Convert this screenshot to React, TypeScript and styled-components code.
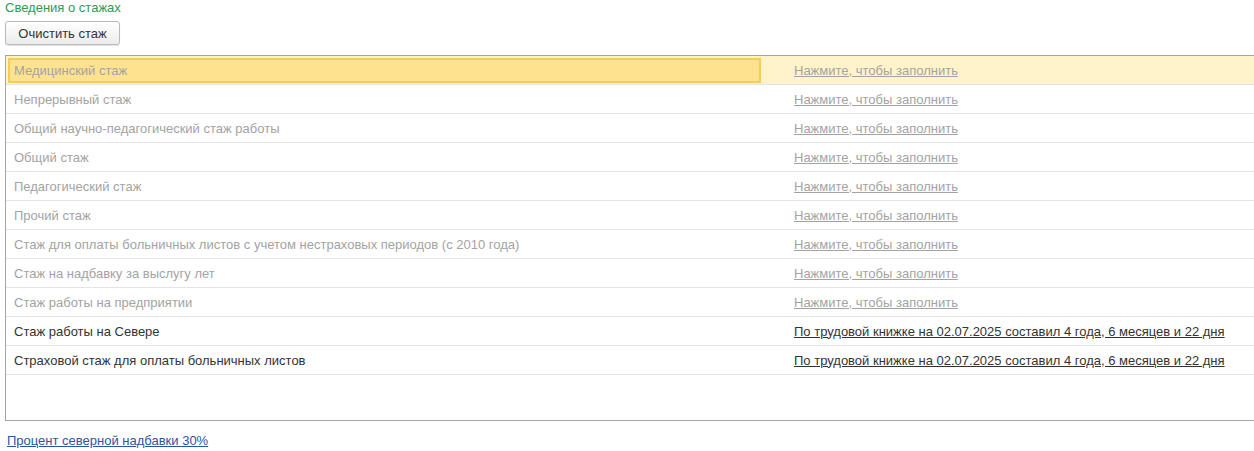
import React from "react";
import styled, { createGlobalStyle } from "styled-components";

const Global = createGlobalStyle`
  html, body { margin: 0; padding: 0; background: #fff; }
  body { font-family: "Liberation Sans", Arial, sans-serif; font-size: 13px; color: #333; }
`;

const Page = styled.div`
  width: 1254px;
  height: 451px;
  overflow: hidden;
  padding: 0 0 0 5px;
  box-sizing: border-box;
`;

const Title = styled.div`
  color: #2e9a55;
  font-size: 13px;
  line-height: 16px;
  height: 19px;
`;

const Button = styled.button`
  display: block;
  height: 24px;
  width: 115px;
  margin-top: 2px;
  border: 1px solid #b9b9b9;
  border-radius: 3px;
  background: linear-gradient(#ffffff, #ececec);
  box-shadow: 0 1px 1px rgba(0,0,0,0.12);
  font-family: "Liberation Sans", Arial, sans-serif;
  font-size: 13px;
  color: #333;
  padding: 0;
`;

const Table = styled.div`
  margin-top: 10px;
  width: 1260px;
  height: 366px;
  box-sizing: border-box;
  border: 1px solid #a5a5a5;
  border-right: none;
  display: flex;
  flex-direction: column;
`;

const Row = styled.div<{ $selected?: boolean }>`
  display: grid;
  grid-template-columns: 755px 1fr;
  height: 29px;
  box-sizing: border-box;
  border-bottom: 1px solid #e4e4e4;
  background: ${(p) => (p.$selected ? "#fff3c9" : "transparent")};
  align-items: center;
`;

const NameCell = styled.div<{ $selected?: boolean; $active?: boolean }>`
  height: 25px;
  margin-left: 2px;
  box-sizing: border-box;
  padding-left: 4px;
  display: flex;
  align-items: center;
  color: ${(p) => (p.$active ? "#333" : "#a3a3a3")};
  background: ${(p) => (p.$selected ? "#fee28f" : "transparent")};
  border: 2px solid ${(p) => (p.$selected ? "#f4cc57" : "transparent")};
  white-space: nowrap;
`;

const ValueLink = styled.a<{ $active?: boolean }>`
  padding-left: 33px;
  color: ${(p) => (p.$active ? "#333" : "#a3a3a3")};
  text-decoration: underline;
  white-space: nowrap;
  cursor: pointer;
`;

const Footer = styled.a`
  display: inline-block;
  margin-top: 12px;
  margin-left: 2px;
  color: #2b55a3;
  text-decoration: underline;
  font-size: 13px;
  cursor: pointer;
`;

const rows: { name: string; active?: boolean }[] = [
  { name: "Медицинский стаж" },
  { name: "Непрерывный стаж" },
  { name: "Общий научно-педагогический стаж работы" },
  { name: "Общий стаж" },
  { name: "Педагогический стаж" },
  { name: "Прочий стаж" },
  { name: "Стаж для оплаты больничных листов с учетом нестраховых периодов (с 2010 года)" },
  { name: "Стаж на надбавку за выслугу лет" },
  { name: "Стаж работы на предприятии" },
  { name: "Стаж работы на Севере", active: true },
  { name: "Страховой стаж для оплаты больничных листов", active: true },
];

export default function App() {
  return (
    <>
      <Global />
      <Page>
        <Title>Сведения о стажах</Title>
        <Button>Очистить стаж</Button>
        <Table>
          {rows.map((r, i) => (
            <Row key={r.name} $selected={i === 0}>
              <NameCell $selected={i === 0} $active={r.active}>
                {r.name}
              </NameCell>
              <div>
                <ValueLink $active={r.active}>
                  {r.active
                    ? "По трудовой книжке на 02.07.2025 составил 4 года, 6 месяцев и 22 дня"
                    : "Нажмите, чтобы заполнить"}
                </ValueLink>
              </div>
            </Row>
          ))}
        </Table>
        <Footer>Процент северной надбавки 30%</Footer>
      </Page>
    </>
  );
}
